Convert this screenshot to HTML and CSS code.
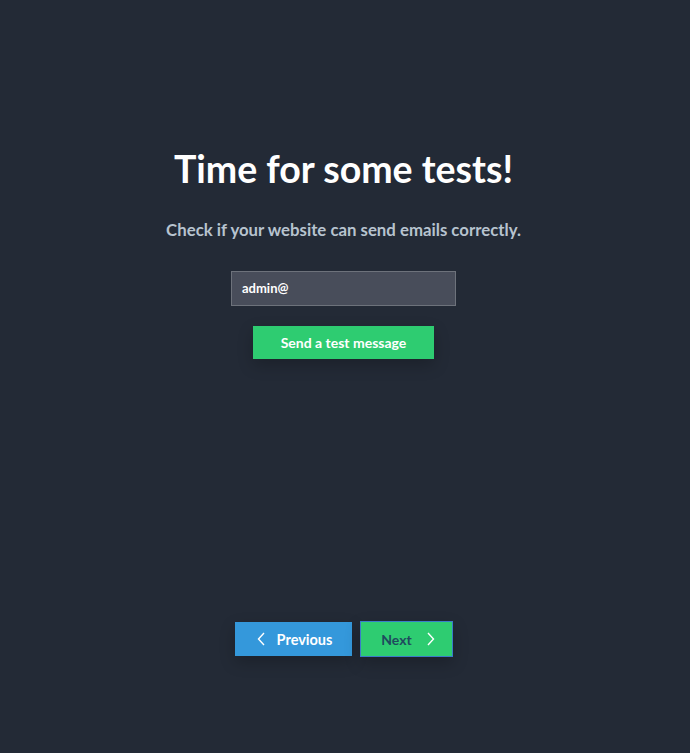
FILE: index.html
```html
<!DOCTYPE html>
<html>
<head>
<meta charset="utf-8">
<link rel="stylesheet" href="styles.css">
</head>
<body>
<div class="page">
  <h1 class="title">Time for some tests!</h1>
  <p class="subtitle">Check if your website can send emails correctly.</p>
  <div class="field">admin@</div>
  <button class="btn btn-send">Send a test message</button>
  <div class="spacer"></div>
  <div class="nav">
    <button class="btn btn-prev">
      <svg class="chev" width="9" height="14" viewBox="0 0 9 14"><path d="M7 1L1.5 7L7 13" fill="none" stroke="#fff" stroke-width="1.4"/></svg>
      Previous
    </button>
    <button class="btn btn-next">
      Next
      <svg class="chev" width="9" height="14" viewBox="0 0 9 14"><path d="M2 1L7.5 7L2 13" fill="none" stroke="#fff" stroke-width="1.4"/></svg>
    </button>
  </div>
</div>
</body>
</html>
```
FILE: styles.css
```css
html, body {
  margin: 0;
  padding: 0;
  background: #232a36;
  height: 100%;
}
.page {
  height: 753px;
  display: flex;
  flex-direction: column;
  align-items: center;
  font-family: "Lato", "Open Sans", sans-serif;
  box-sizing: border-box;
  padding-top: 147px;
  padding-right: 3px;
}
.title {
  margin: 0;
  color: #fff;
  font-size: 37.5px;
  font-weight: 700;
  line-height: 44px;
}
.subtitle {
  margin: 29px 0 0;
  color: #b7c3cf;
  font-size: 16.8px;
  font-weight: 700;
  line-height: 20px;
}
.field {
  margin-top: 31px;
  width: 225px;
  height: 35px;
  box-sizing: border-box;
  background: #484d5a;
  border: 1px solid #6d727b;
  color: #fff;
  font-size: 13px;
  font-weight: 700;
  padding-left: 10px;
  line-height: 33px;
}
.btn {
  border: none;
  font-family: inherit;
  font-weight: 700;
  font-size: 14px;
  color: #fff;
  cursor: pointer;
  box-shadow: 0 6px 16px rgba(0,0,0,0.22);
}
.btn-send {
  margin-top: 20px;
  width: 181px;
  height: 33px;
  background: #2ecc71;
}
.spacer {
  height: 262px;
}
.nav {
  display: flex;
  gap: 8px;
  align-items: center;
}
.btn-prev {
  width: 117px;
  height: 34px;
  background: #3498db;
  display: flex;
  align-items: center;
  justify-content: center;
  gap: 11px;
  padding: 0 0 0 3px;
  font-size: 14.5px;
}
.btn-next {
  width: 93px;
  height: 36px;
  background: #2ecc71;
  border: 1px solid #3a7cc9;
  color: #1f4a5e;
  display: flex;
  align-items: center;
  justify-content: center;
  gap: 14px;
  padding: 0 0 0 4px;
}
```
